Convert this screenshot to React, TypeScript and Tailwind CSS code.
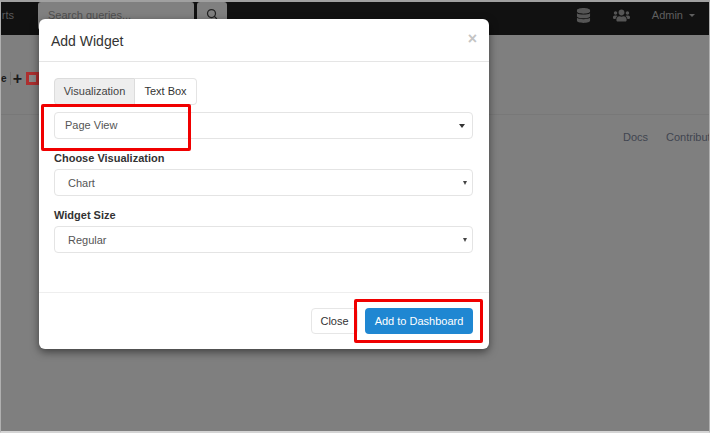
import { Search } from "lucide-react";
import { FaDatabase, FaUsers } from "react-icons/fa";

const sans = "font-['Liberation_Sans',Arial,sans-serif]";

const SelectBox = ({ value, inset, children }: { value: string; inset: string; children: React.ReactNode }) => (
  <div className={`h-[27px] rounded-[4px] border border-[#e4e4e4] bg-white flex items-center justify-between text-[11px] text-[#555] ${inset}`}>
    <span>{value}</span>
    {children}
  </div>
);

const RedBox = ({ className }: { className: string }) => (
  <div className={`absolute border-[3px] border-[#f00000] rounded-[2px] ${className}`} />
);

const App = () => {
  return (
    <div className={`relative w-[710px] h-[433px] overflow-hidden bg-[#7f7f7f] border-t-2 border-b-2 border-l border-r border-t-[#a0a0a0] border-b-[#d4d4d4] border-l-[#b0b0b0] border-r-[#b0b0b0] ${sans}`}>
      {/* navbar behind the backdrop */}
      <div className="h-[33px] bg-[#111] flex items-start text-[#5a5a5a] text-[11px]">
        <span className="w-[37px] pt-[5px] pr-[24px] text-right whitespace-nowrap">rts</span>
        <div className="w-[156px] h-[28px] bg-[#808080] rounded-[3px] pl-[10px] pt-[5px] text-[#4f4f4f]">Search queries...</div>
        <div className="ml-[3px] w-[30px] h-[28px] bg-[#808080] rounded-[3px] flex justify-center pt-[6px]">
          <Search size={12} strokeWidth={2.5} color="#222" />
        </div>
        <div className="ml-auto flex items-center h-[26px] pr-[14px] text-[#5f5f5f]">
          <FaDatabase size={15} color="#555" />
          <FaUsers size={17} color="#555" className="ml-[22px]" />
          <span className="ml-[22px]">Admin</span>
          <span className="ml-[6px] border-x-[3px] border-t-[3px] border-x-transparent border-t-[#5f5f5f]" />
        </div>
      </div>

      {/* page content dimmed */}
      <div className="flex h-[50px] items-end">
        <div className="flex items-center h-[13px] w-[38px] font-bold text-[16px] text-[#1a1a1a]">
          <span className="w-[10px] h-[13px] border-r border-[#6f6f6f] text-[10px] leading-[13px] overflow-hidden">e</span>
          <span className="w-[15px] pr-[2px] text-center leading-[13px]">+</span>
          <span className="w-[13px] h-[13px] bg-[#8a8a8a] border-[3px] border-[#ad2f2f]" />
        </div>
      </div>
      <div className="mt-[29px] border-t border-[#787878] flex justify-end pt-[14px] text-[11px] text-[#3f4550] whitespace-nowrap">
        <span className="mr-[18px]">Docs</span>
        <span className="w-[43px] overflow-hidden">Contribute</span>
      </div>

      {/* modal */}
      <div className="absolute left-[38px] top-[17px] w-[450px] h-[330px] bg-white rounded-[6px] shadow-[0_3px_9px_rgba(0,0,0,0.5)] flex flex-col text-[#333]">
        <div className="h-[43px] shrink-0 border-b border-[#e5e5e5] flex items-center justify-between pl-[12px] pr-[12px]">
          <span className="text-[14px] text-[#333] pt-[2px]">Add Widget</span>
          <span className="text-[#c4c4c4] font-bold text-[16px] pb-[3px]">×</span>
        </div>
        <div className="flex-1 pl-[15px] pr-[16px] pt-[16px]">
          <div className="flex h-[27px] text-[11px]">
            <div className="w-[81px] rounded-l-[4px] border border-[#dcdcdc] bg-[#eee] text-[#444] flex items-center justify-center">Visualization</div>
            <div className="w-[62px] rounded-r-[4px] border border-l-0 border-[#e4e4e4] flex items-center justify-center">Text Box</div>
          </div>
          <div className="mt-[7px]">
            <SelectBox value="Page View" inset="pl-[10px] pr-[7px]">
              <span className="border-x-[3px] border-t-[4px] border-x-transparent border-t-[#333]" />
            </SelectBox>
          </div>
          <div className="mt-[12px] text-[11px] font-bold h-[18px] leading-[15px]">Choose Visualization</div>
          <SelectBox value="Chart" inset="pl-[13px] pr-[5px] pt-[1px]">
            <span className="border-x-[2px] border-t-[4px] border-x-transparent border-t-[#444]" />
          </SelectBox>
          <div className="mt-[12px] text-[11px] font-bold h-[18px] leading-[15px]">Widget Size</div>
          <SelectBox value="Regular" inset="pl-[13px] pr-[5px] pt-[1px]">
            <span className="border-x-[2px] border-t-[4px] border-x-transparent border-t-[#444]" />
          </SelectBox>
        </div>
        <div className="h-[57px] shrink-0 border-t border-[#eee] flex items-center justify-end gap-[7px] pl-[15px] pr-[16px] text-[11px]">
          <div className="w-[47px] h-[26px] rounded-[4px] border border-[#e6e6e6] flex items-center justify-center">Close</div>
          <div className="w-[108px] h-[26px] rounded-[4px] bg-[#1f87d2] text-white flex items-center justify-center">Add to Dashboard</div>
        </div>
      </div>

      {/* annotation boxes */}
      <RedBox className="left-[40px] top-[102px] w-[150px] h-[47px]" />
      <RedBox className="left-[353px] top-[297px] w-[129px] h-[44px]" />
    </div>
  );
};

export default App;
